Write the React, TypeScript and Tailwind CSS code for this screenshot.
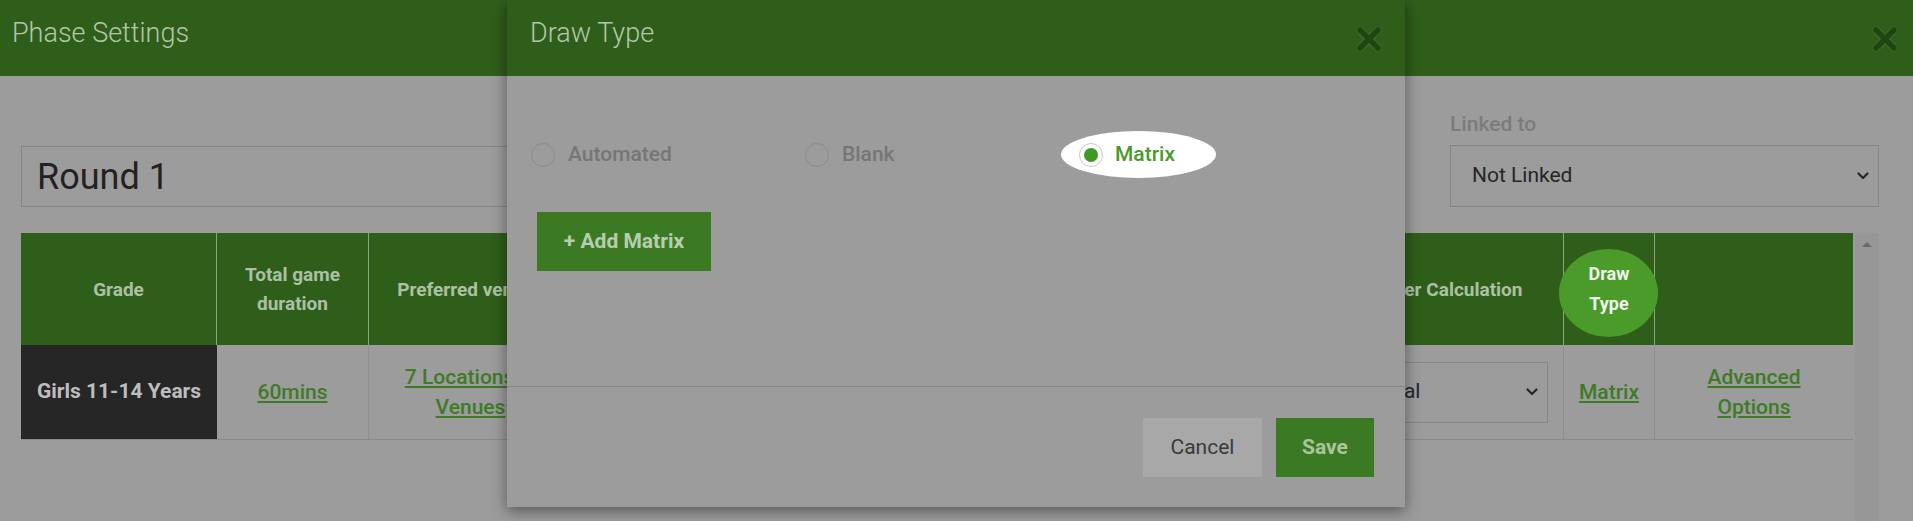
import React from "react";

const cols = "grid-cols-[196px_152px_204px_375px_374px_242px_91px_198px]";

function CloseIcon() {
    return (
        <svg width="26" height="26" viewBox="0 0 26 26" className="drop-shadow-[0_0_1px_rgba(90,140,70,0.8)]">
            <path d="M4 4 L22 22 M22 4 L4 22" stroke="#1f4612" strokeWidth="5.5" strokeLinecap="round" />
        </svg>
    );
}

function Chevron({ size = 14 }: { size?: number }) {
    return (
        <svg width={size} height={size} viewBox="0 0 14 14">
            <path d="M2.5 4.5 L7 9 L11.5 4.5" fill="none" stroke="#262626" strokeWidth="2.2" strokeLinecap="round" strokeLinejoin="round" />
        </svg>
    );
}

function HeaderCell({ children }: { children?: React.ReactNode }) {
    return (
        <div className="flex items-center justify-center border-r border-[#8aa67e] px-3 text-center text-[19px] font-bold leading-[29px] text-[#abc1a3] last:border-r-0">
            {children}
        </div>
    );
}

function LinkText({ children }: { children: React.ReactNode }) {
    return <span className="text-[21px] font-medium leading-[30px] text-[#3e7b25] underline underline-offset-2">{children}</span>;
}

function Radio({ label }: { label: string }) {
    return (
        <label className="flex h-[26px] items-center gap-[13px]">
            <span className="h-[24px] w-[24px] rounded-full border-[1.5px] border-[#8b8b8b]" />
            <span className="text-[21px] font-medium text-[#767676]">{label}</span>
        </label>
    );
}

export default function App() {
    return (
        <div className="relative h-[521px] w-[1913px] overflow-hidden bg-[#9c9c9c] font-['Roboto',sans-serif]">
            {/* Phase settings page (dimmed) */}
            <div className="flex h-[76px] items-start justify-between bg-[#2f5e1a] pl-[12px] pr-[15px]">
                <h1 className="pt-[16px] text-[27px] font-light leading-[34px] text-[#b3c7ab]">Phase Settings</h1>
                <div className="pt-[26px]">
                    <CloseIcon />
                </div>
            </div>

            <div className="pl-[21px] pr-[34px]">
                <div className="flex items-end gap-[90px] pt-[35px]">
                    <div className="flex h-[61px] flex-1 items-center border border-[#858585] px-[15px] text-[36px] text-[#222]">
                        Round 1
                    </div>
                    <div className="flex w-[429px] flex-col gap-[8px]">
                        <span className="text-[21px] font-medium leading-[26px] text-[#7b7b7b]">Linked to</span>
                        <div className="flex h-[62px] items-center justify-between border border-[#868686] pl-[21px] pr-[8px] text-[21px] text-[#262626]">
                            Not Linked
                            <Chevron />
                        </div>
                    </div>
                </div>

                <div className="mt-[26px] flex">
                    <div className="w-[1832px]">
                        <div className={`grid h-[112px] bg-[#2f5e1a] ${cols}`}>
                            <HeaderCell>Grade</HeaderCell>
                            <HeaderCell>
                                Total game
                                <br />
                                duration
                            </HeaderCell>
                            <HeaderCell>Preferred venues</HeaderCell>
                            <HeaderCell>Minimum gap between matches</HeaderCell>
                            <HeaderCell>Maximum matches per day</HeaderCell>
                            <HeaderCell>Ladder Calculation</HeaderCell>
                            <div className="relative flex items-center justify-center border-r border-[#8aa67e]">
                                <span className="absolute left-[-5px] top-[16px] h-[88px] w-[99px] rounded-[50%] bg-[#4b9b2b]" />
                                <span className="relative text-center text-[18px] font-bold leading-[30px] text-[#eef4ea]">
                                    Draw
                                    <br />
                                    Type
                                </span>
                            </div>
                            <HeaderCell />
                        </div>
                        <div className={`grid h-[95px] border-b border-[#8a8a8a] ${cols}`}>
                            <div className="flex items-center justify-center bg-[#262626] text-[21px] font-bold text-[#bdbdbd]">
                                Girls 11-14 Years
                            </div>
                            <div className="flex items-center justify-center border-r border-[#8e8e8e]">
                                <LinkText>60mins</LinkText>
                            </div>
                            <div className="flex items-center justify-center border-r border-[#8e8e8e] px-5 text-center">
                                <LinkText>7 Locations, 3 Venues</LinkText>
                            </div>
                            <div className="flex items-center justify-center border-r border-[#8e8e8e]">
                                <LinkText>10mins</LinkText>
                            </div>
                            <div className="flex items-center justify-center border-r border-[#8e8e8e]">
                                <LinkText>2</LinkText>
                            </div>
                            <div className="flex items-center border-r border-[#8e8e8e] pl-[16px] pr-[15px]">
                                <div className="flex h-[61px] w-full items-center justify-between border border-[#868686] pl-[12px] pr-[8px] text-[21px] text-[#262626]">
                                    Manual
                                    <Chevron />
                                </div>
                            </div>
                            <div className="flex items-center justify-center border-r border-[#8e8e8e]">
                                <LinkText>Matrix</LinkText>
                            </div>
                            <div className="flex items-center justify-center text-center">
                                <LinkText>
                                    Advanced
                                    <br />
                                    Options
                                </LinkText>
                            </div>
                        </div>
                    </div>
                    <div className="ml-[2px] flex h-[300px] w-[24px] justify-center bg-[#979797] pt-[9px]">
                        <span className="h-0 w-0 border-x-[5px] border-b-[5px] border-x-transparent border-b-[#6a6a6a]" />
                    </div>
                </div>
            </div>

            {/* Draw Type dialog */}
            <div className="absolute left-[507px] top-0 flex h-[507px] w-[898px] flex-col bg-[#9c9c9c] shadow-[0_4px_14px_rgba(0,0,0,0.45)]">
                <div className="flex h-[76px] items-start justify-between bg-[#2f5e1a] pl-[23px] pr-[23px]">
                    <h2 className="pt-[16px] text-[27px] font-light leading-[34px] text-[#b3c7ab]">Draw Type</h2>
                    <div className="pt-[26px]">
                        <CloseIcon />
                    </div>
                </div>
                <div className="flex-1 pl-[24px] pt-[66px]">
                    <div className="grid grid-cols-[274px_274px_274px]">
                        <Radio label="Automated" />
                        <Radio label="Blank" />
                        <label className="relative flex h-[26px] items-center gap-[12px]">
                            <span className="absolute left-[-18px] top-[-11px] h-[47px] w-[155px] rounded-[50%] bg-white" />
                            <span className="relative flex h-[24px] w-[24px] items-center justify-center rounded-full border border-[#c9c9c9] bg-white">
                                <span className="h-[14px] w-[14px] rounded-full bg-[#3f9a22]" />
                            </span>
                            <span className="relative text-[21px] font-medium text-[#4a9a2a]">Matrix</span>
                        </label>
                    </div>
                    <button className="ml-[6px] mt-[44px] h-[59px] w-[174px] bg-[#3b7a22] text-[21px] font-bold text-[#b7cdb0]">
                        + Add Matrix
                    </button>
                </div>
                <div className="flex justify-end gap-[14px] border-t border-[#868686] pb-[30px] pr-[31px] pt-[31px]">
                    <button className="h-[59px] w-[119px] bg-[#a8a8a8] text-[21px] text-[#3a3a3a]">Cancel</button>
                    <button className="h-[59px] w-[98px] bg-[#3b7a22] text-[21px] font-bold text-[#a9c69c]">Save</button>
                </div>
            </div>
        </div>
    );
}
